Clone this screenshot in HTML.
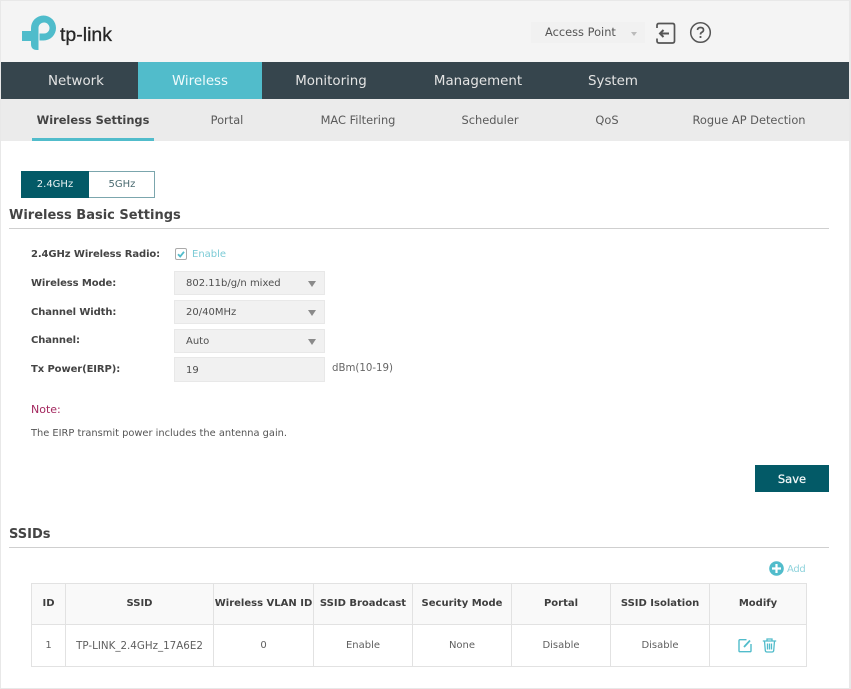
<!DOCTYPE html>
<html><head><meta charset="utf-8"><style>
html,body{margin:0;padding:0;background:#fff}
body{width:851px;height:689px;position:relative;overflow:hidden;font-family:"DejaVu Sans",sans-serif;font-size:10px;color:#555}
div,span.a{position:absolute;white-space:nowrap}
.t{line-height:16px;height:16px}
.c{text-align:center}
.b{font-weight:bold;color:#444;letter-spacing:-.1px}
.nav{font-size:13.400px;color:#e4e4e4;top:73px;line-height:18px;text-align:center}
.sub{font-size:11.400px;color:#5a5a5a;top:112px;line-height:16px;text-align:center}
.sel{left:174px;width:149px;height:22px;background:#f1f1f1;border:1px solid #e8e8e8;line-height:24px;text-indent:11px;color:#4f4f4f}
.arr{left:308px;width:0;height:0;border-left:4px solid transparent;border-right:4px solid transparent;border-top:6px solid #8a8a8a}
.h{font-size:13px;font-weight:bold;color:#444;left:9px;line-height:18px}
.ln{height:1px;background:#cfcfcf;left:9px;width:820px}
.v{width:1px;background:#e2e2e2;top:583px;height:84px}
.th{top:596px;font-weight:bold;color:#3f3f3f;text-align:center;line-height:16px}
.td{top:638px;color:#5f5f5f;text-align:center;line-height:16px}
</style></head><body>
<div style="left:0;top:0;width:851px;height:689px;box-sizing:border-box;border:1px solid #e8e8e8;border-right-width:2px"></div>
<div style="left:1px;top:1px;width:848px;height:61px;background:#f4f4f4"></div>
<svg style="position:absolute;left:0;top:0" width="60" height="60" viewBox="0 0 60 60">
<path d="M31 31V28A12.500 12.500 0 1 1 43.500 40.500H39.500V33.500H43.500A5.500 5.500 0 1 0 38.500 28V50H37Q31 50 31 44V41H22V31Z" fill="#4fbccb"/>
</svg>
<div style="left:60px;top:23px;font-family:'Liberation Sans',sans-serif;font-size:19.500px;line-height:24px;color:#262626;-webkit-text-stroke:.3px #262626">tp-link</div>

<div style="left:531px;top:22px;width:114px;height:21px;background:#f1f1f1"></div>
<div style="left:545px;top:24px;font-size:11.400px;line-height:16px;color:#555">Access Point</div>
<div style="left:631px;top:32px;width:0;height:0;border-left:3px solid transparent;border-right:3px solid transparent;border-top:4px solid #bbb"></div>
<svg style="position:absolute;left:654px;top:21px" width="24" height="24" viewBox="0 0 24 24" fill="none" stroke="#555" stroke-width="1.700">
<path d="M3 7V4.500Q3 2.500 5 2.500H18.500Q20.500 2.500 20.500 4.500V20Q20.500 22 18.500 22H5Q3 22 3 20V17.500"/>
<path d="M15 12.500H6M9.500 9L6 12.500L9.500 16" stroke-width="2"/>
</svg>
<svg style="position:absolute;left:689px;top:21px" width="23" height="23" viewBox="0 0 23 23" fill="none" stroke="#555" stroke-width="1.500">
<circle cx="11.500" cy="11.500" r="9.800"/>
<path d="M8.500 9Q8.700 6.500 11.500 6.500Q14.500 6.500 14.500 9Q14.500 10.500 12.800 11.300Q11.500 12 11.500 13.500" stroke-width="1.700"/>
<path d="M11.500 15V17" stroke-width="1.800"/>
</svg>

<div style="left:1px;top:62px;width:848px;height:37px;background:#36454d"></div>
<div style="left:138px;top:62px;width:124px;height:37px;background:#51bccb"></div>
<div class="nav" style="left:16px;width:120px">Network</div>
<div class="nav" style="left:140px;width:120px;color:#f0fbfc">Wireless</div>
<div class="nav" style="left:271px;width:120px">Monitoring</div>
<div class="nav" style="left:418px;width:120px">Management</div>
<div class="nav" style="left:553px;width:120px">System</div>

<div style="left:1px;top:99px;width:848px;height:42px;background:#ebebeb"></div>
<div style="left:32px;top:138px;width:122px;height:3px;background:#51bccb"></div>
<div class="sub" style="left:13px;width:160px;font-weight:bold;color:#444">Wireless Settings</div>
<div class="sub" style="left:167px;width:120px">Portal</div>
<div class="sub" style="left:298px;width:120px">MAC Filtering</div>
<div class="sub" style="left:430px;width:120px">Scheduler</div>
<div class="sub" style="left:547px;width:120px">QoS</div>
<div class="sub" style="left:669px;width:160px">Rogue AP Detection</div>

<div style="left:21px;top:171px;width:132px;height:25px;border:1px solid #7ba6ad;background:#fff"></div>
<div class="c" style="left:21px;top:171px;width:68px;height:27px;line-height:28px;background:#035a67;color:#eaf2f3">2.4GHz</div>
<div class="c" style="left:89px;top:171px;width:66px;line-height:28px;color:#4a6a70">5GHz</div>

<div class="h" style="top:207px">Wireless Basic Settings</div>
<div class="ln" style="top:228px"></div>

<div class="t b" style="left:31px;top:247px">2.4GHz Wireless Radio:</div>
<div style="left:175px;top:248px;width:10px;height:10px;border:1px solid #aaa;border-radius:2px;background:#fff"></div>
<svg style="position:absolute;left:175px;top:248px" width="12" height="12" viewBox="0 0 12 12" fill="none"><path d="M3 6.200L5.200 8.500L9 3.800" stroke="#51bccb" stroke-width="1.800"/></svg>
<div class="t" style="left:192px;top:247px;color:#7ccbd6">Enable</div>

<div class="t b" style="left:31px;top:276px">Wireless Mode:</div>
<div class="t b" style="left:31px;top:305px">Channel Width:</div>
<div class="t b" style="left:31px;top:333px">Channel:</div>
<div class="t b" style="left:31px;top:362px">Tx Power(EIRP):</div>

<div class="sel" style="top:271px">802.11b/g/n mixed</div>
<div class="arr" style="top:281px"></div>
<div class="sel" style="top:300px">20/40MHz</div>
<div class="arr" style="top:310px"></div>
<div class="sel" style="top:329px">Auto</div>
<div class="arr" style="top:339px"></div>
<div class="sel" style="top:357px;height:23px;line-height:25px">19</div>
<div class="t" style="left:332px;top:361px;color:#666;font-size:10.200px">dBm(10-19)</div>

<div style="left:31px;top:402px;font-size:11px;line-height:16px;color:#a3275e">Note:</div>
<div class="t" style="left:31px;top:426px;font-size:9.850px;color:#555">The EIRP transmit power includes the antenna gain.</div>

<div class="c" style="left:755px;top:465px;width:74px;height:27px;line-height:28px;background:#035a67;color:#f2f7f8;font-size:11.500px;-webkit-text-stroke:.25px #f2f7f8">Save</div>

<div class="h" style="top:526px">SSIDs</div>
<div class="ln" style="top:547px"></div>

<svg style="position:absolute;left:769px;top:561px" width="15" height="15" viewBox="0 0 15 15"><circle cx="7.500" cy="7.500" r="7.300" fill="#51bccb"/><path d="M7.500 3V12M3 7.500H12" stroke="#fff" stroke-width="2.200"/></svg>
<div class="t" style="left:787px;top:562px;color:#8fd3dc;letter-spacing:-.3px">Add</div>

<div style="left:31px;top:583px;width:775px;height:41px;background:#f9f9f9"></div>
<div style="left:31px;top:583px;width:776px;height:1px;background:#e2e2e2"></div>
<div style="left:31px;top:624px;width:776px;height:1px;background:#e2e2e2"></div>
<div style="left:31px;top:666px;width:776px;height:1px;background:#e2e2e2"></div>
<div class="v" style="left:31px"></div><div class="v" style="left:65px"></div><div class="v" style="left:213px"></div><div class="v" style="left:313px"></div><div class="v" style="left:412px"></div><div class="v" style="left:511px"></div><div class="v" style="left:610px"></div><div class="v" style="left:709px"></div><div class="v" style="left:806px"></div>

<div class="th" style="left:32px;width:33px">ID</div>
<div class="th" style="left:66px;width:147px">SSID</div>
<div class="th" style="left:214px;width:99px">Wireless VLAN ID</div>
<div class="th" style="left:314px;width:98px">SSID Broadcast</div>
<div class="th" style="left:413px;width:98px">Security Mode</div>
<div class="th" style="left:512px;width:98px">Portal</div>
<div class="th" style="left:611px;width:98px">SSID Isolation</div>
<div class="th" style="left:710px;width:96px">Modify</div>

<div class="td" style="left:32px;width:33px">1</div>
<div class="td" style="left:66px;width:147px;font-size:10.300px">TP-LINK_2.4GHz_17A6E2</div>
<div class="td" style="left:214px;width:99px">0</div>
<div class="td" style="left:314px;width:98px">Enable</div>
<div class="td" style="left:413px;width:98px">None</div>
<div class="td" style="left:512px;width:98px">Disable</div>
<div class="td" style="left:611px;width:98px">Disable</div>

<svg style="position:absolute;left:738px;top:638px" width="15" height="15" viewBox="0 0 15 15" fill="none" stroke="#51bccb" stroke-width="1.400">
<path d="M8.500 1.700H2Q1 1.700 1 2.700V12.700Q1 13.700 2 13.700H12Q13 13.700 13 12.700V6"/>
<path d="M6 9L12 2.500" stroke-width="1.800"/>
</svg>
<svg style="position:absolute;left:762px;top:638px" width="15" height="15" viewBox="0 0 15 15" fill="none" stroke="#51bccb" stroke-width="1.300">
<path d="M.800 3H14.200M5 3V1H10V3M2.500 3L3.300 12.500Q3.500 14 5 14H10Q11.500 14 11.700 12.500L12.500 3"/>
<path d="M5.500 5.500V11.500M7.500 5.500V11.500M9.500 5.500V11.500"/>
</svg>
</body></html>
